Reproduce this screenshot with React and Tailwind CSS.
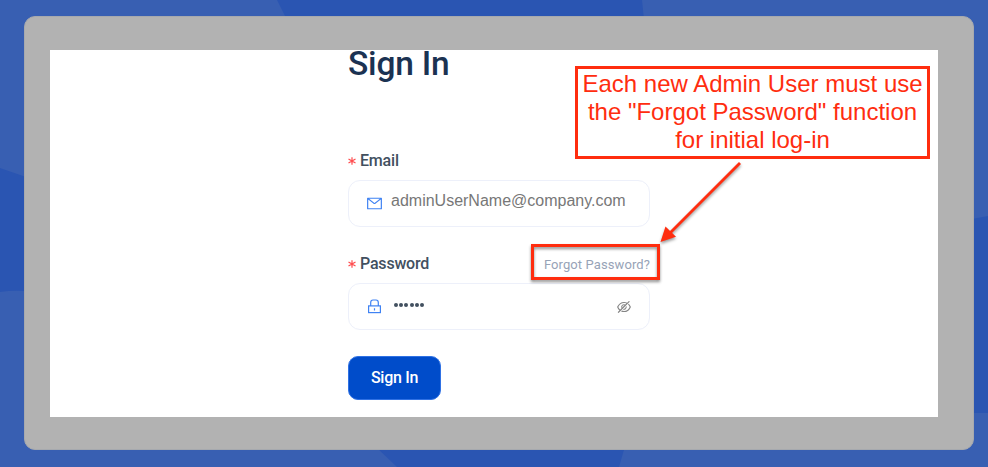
import React from "react";
import { AiOutlineMail, AiOutlineEyeInvisible } from "react-icons/ai";

function Label({ children }) {
  return (
    <label className="flex items-center text-[16px] leading-[22px] font-medium tracking-[-0.2px] text-[#42505f]">
      <svg className="mr-[4px] h-[8px] w-[8px]" viewBox="0 0 8 8" stroke="#ff4d4f" strokeWidth="1.2">
        <path d="M4 0.2V7.8M0.5 2L7.5 6M7.5 2L0.5 6" />
      </svg>
      {children}
    </label>
  );
}

function LockIcon() {
  return (
    <svg className="mx-[2px] h-[15px] w-[13px]" viewBox="0 0 13 15" fill="none" stroke="#3f82f3" strokeWidth="1.2">
      <rect x="0.6" y="6.900" width="11.800" height="6.700" />
      <path d="M2.700 6.900V3.600Q2.700 1 5 1H8Q10.300 1 10.300 3.600V6.900M6.500 9.200V11.600" />
    </svg>
  );
}

function Backdrop() {
  return (
    <svg className="absolute inset-0 h-full w-full" viewBox="0 0 988 467" fill="#2a55b2">
      <path d="M277 0H642L644 20H287Z" />
      <path d="M0 168L26 177V291Q12 290 0 292Z" />
      <path d="M972 219L988 216V413H972Z" />
      <path d="M377 448H624.500L619 467H397Z" />
    </svg>
  );
}

export default function App() {
  return (
    <div className="relative h-[467px] w-[988px] overflow-hidden bg-[#385fb2] px-6 pt-4 font-['Roboto',sans-serif]">
      <Backdrop />
      <div className="relative h-[434px] w-[950px] rounded-[11px] border border-[#a6a9ae] bg-[#b2b2b2] px-[25px] pt-[33px]">
        <main className="h-[367px] w-[888px] bg-white pl-[298px]">
          <form className="flex w-[302px] flex-col items-start">
            <h1 className="h-[27px] whitespace-nowrap text-[33.500px] leading-[27px] font-medium tracking-[-0.2px] text-[#1b3252]">Sign In</h1>
            <div className="mt-[73px]">
              <Label>Email</Label>
            </div>
            <div className="mt-[8px] flex h-[47px] w-full items-center rounded-[12px] border border-[#edf0fa] px-[17px]">
              <AiOutlineMail className="h-[17px] w-[17px] text-[#3f82f3]" />
              <span className="-mt-[6px] ml-[8px] font-['Liberation_Sans',sans-serif] text-[16px] text-[#777777]">adminUserName@company.com</span>
            </div>
            <div className="mt-[26px] flex w-full items-center justify-between">
              <Label>Password</Label>
              <span className="mt-[2px] text-[13px] leading-[20px] tracking-[0.1px] whitespace-nowrap text-[#97a3b7]">Forgot Password?</span>
            </div>
            <div className="mt-[8px] flex h-[47px] w-full items-center rounded-[12px] border border-[#edf0fa] px-[17px]">
              <LockIcon />
              <span className="-mt-[3px] ml-[11px] flex gap-[1.2px]">
                {[0, 1, 2, 3, 4, 5].map((i) => (
                  <i key={i} className="h-[4px] w-[4px] rounded-full bg-[#42505f]" />
                ))}
              </span>
              <AiOutlineEyeInvisible className="ml-auto h-[16px] w-[16px] text-[#858585]" />
            </div>
            <button type="button" className="mt-[26px] h-[44px] w-[93px] rounded-[10px] border border-[#2f71e4] bg-[#004cca] text-[16px] font-medium tracking-[-0.3px] text-white">Sign In</button>
          </form>
        </main>
      </div>

      <div className="absolute left-[575px] top-[66px] h-[93px] w-[355px] border-[3px] border-[#ff2d0f] bg-white pt-[1px] text-center font-['Liberation_Sans',sans-serif] text-[24px] leading-[28px] whitespace-nowrap text-[#ff2d0f]">
        <p>Each new Admin User must use</p>
        <p>the "Forgot Password" function</p>
        <p>for initial log-in</p>
      </div>
      <div className="absolute left-[531px] top-[244px] h-[36px] w-[129px] border-[3px] border-[#ff2d0f] drop-shadow-[0_2px_1.5px_rgba(0,0,0,0.45)]" />
      <svg className="absolute left-[655px] top-[157px] h-[90px] w-[90px] drop-shadow-[0_2px_1.5px_rgba(0,0,0,0.4)]" viewBox="655 157 90 90">
        <path d="M740 163L668 235" stroke="#ff2d0f" strokeWidth="2.8" />
        <path d="M660.500 242L665.500 226.500L676 236.800Z" fill="#ff2d0f" />
      </svg>
    </div>
  );
}
